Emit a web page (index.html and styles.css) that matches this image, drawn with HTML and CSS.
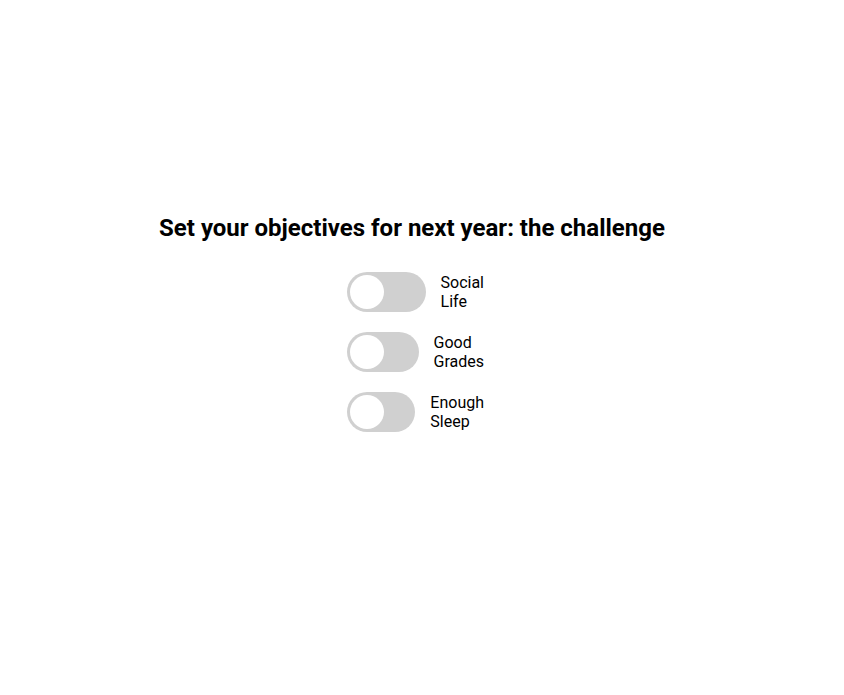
FILE: index.html
```html
<!DOCTYPE html>
<html lang="en">
<head>
<meta charset="utf-8">
<title>Objectives</title>
<link rel="stylesheet" href="styles.css">
</head>
<body>
<main class="page">
  <h2 class="title">Set your objectives for next year: the challenge</h2>
  <div class="options">
    <label class="option">
      <span class="switch"><span class="knob"></span></span>
      <span class="option-text">Social Life</span>
    </label>
    <label class="option">
      <span class="switch"><span class="knob"></span></span>
      <span class="option-text">Good Grades</span>
    </label>
    <label class="option">
      <span class="switch"><span class="knob"></span></span>
      <span class="option-text">Enough Sleep</span>
    </label>
  </div>
</main>
</body>
</html>
```
FILE: styles.css
```css
html, body {
  margin: 0;
  padding: 0;
  background: #ffffff;
}

body {
  font-family: Roboto, "Liberation Sans", sans-serif;
  color: #000000;
}

.page {
  width: 824px;
  padding-top: 214px;
  display: flex;
  flex-direction: column;
  align-items: center;
}

.title {
  margin: 0;
  font-size: 24px;
  font-weight: 700;
  line-height: 28px;
  text-align: center;
}

.options {
  margin-top: 30px;
  padding-left: 7px;
  width: 137px;
  display: flex;
  flex-direction: column;
  gap: 20px;
}

.option {
  display: flex;
  align-items: center;
  gap: 15px;
  width: 137px;
}

.switch {
  flex: 1 1 0;
  min-width: 0;
  height: 40px;
  border-radius: 20px;
  background: #d0d0d0;
  display: flex;
  align-items: center;
  padding: 0 3px;
}

.knob {
  width: 34px;
  height: 34px;
  border-radius: 50%;
  background: #ffffff;
  flex: none;
}

.option-text {
  flex: none;
  width: min-content;
  font-size: 16px;
  line-height: 19px;
}
```
